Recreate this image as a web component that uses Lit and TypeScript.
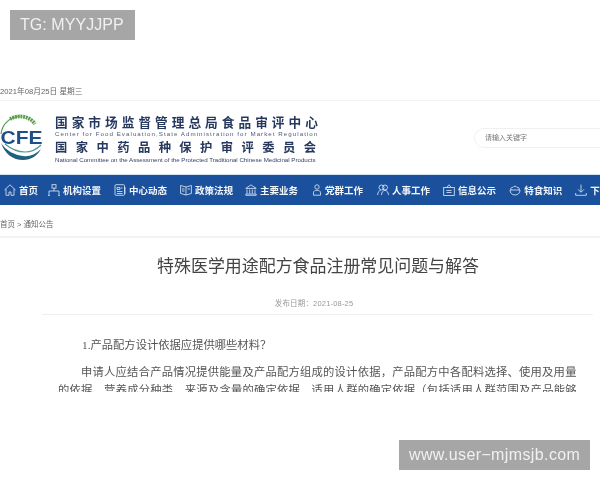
import { LitElement, html, css, svg } from "lit";
import { customElement } from "lit/decorators.js";

const I = (body: unknown) => html`<svg class="ic" viewBox="0 0 12 12" fill="none" stroke="#e4ecf6" stroke-width=".8">${body}</svg>`;
const navItems: [string, unknown][] = [
  ["首页", svg`<path d="M.5 6 6 .8 11.5 6M2 5v6.300h3V8h2v3.300h3V5"/>`],
  ["机构设置", svg`<rect x="4" y=".7" width="4" height="3.400"/><path d="M6 4v3M1 10V7h10v3M1 10v1.500M11 10v1.500M.2 11.500h1.600M10.200 11.500h1.600"/>`],
  ["中心动态", svg`<rect x="1" y=".7" width="9.500" height="10.600" rx="1"/><path d="M3 3.500h3v2H3zM3 7.500h5.500M3 9.500h5.500M7 4h1.500M11 3v7"/>`],
  ["政策法规", svg`<path d="M.6 1.500 6 3l5.400-1.500v8L6 11 .6 9.500zM6 3v8"/><path d="M2 5h2.500M7.500 5H10M2 7h2.500"/>`],
  ["主要业务", svg`<path d="M.8 4.400 6 .9l5.200 3.500zM2 5.500v4M4.700 5.500v4M7.300 5.500v4M10 5.500v4M.8 10h10.400v1.300H.8z"/>`],
  ["党群工作", svg`<circle cx="7" cy="3" r="2.200"/><path d="M3.500 11.200V8.800C3.500 7 5 6.300 7 6.300s3.500.7 3.500 2.500v2.400z"/>`],
  ["人事工作", svg`<circle cx="4.500" cy="3.500" r="2.500"/><circle cx="8" cy="3.500" r="2.500"/><path d="M.6 11c.3-3 1.600-4.400 3-4.800M4.400 11c.3-3 1.800-4.600 3.600-4.600s3.200 1.600 3.500 4.600"/>`],
  ["信息公示", svg`<rect x=".7" y="3.400" width="10.600" height="8"/><path d="M3.800 3.400 6 .8l2.200 2.600M3.500 6.500h5M3.500 8.500h5"/>`],
  ["特食知识", svg`<path d="M1 6h10c0 3-2 5-5 5S1 9 1 6zM2 6c-1-2 1-3 2-2.600C4.500 1.800 7.500 1.800 8 3.400 9.500 3 11 4.500 10 6"/>`],
  ["下载中心", svg`<path d="M6 .6v7.400M3 5.300 6 8.300l3-3M.7 9v2.300h10.600V9"/>`],
];
const gaps = [0, 10, 13, 13, 12, 12, 14, 13, 13, 13];

@customElement("app-root")
export class AppRoot extends LitElement {
  static styles = css`
    :host { display: block; position: relative; width: 600px; height: 480px; overflow: hidden; background: #fff;
      font-family: "Liberation Sans", "Noto Sans CJK SC", sans-serif; }
    .page { height: 392px; overflow: hidden; padding-top: 81px; box-sizing: border-box; filter: blur(.4px); }
    .date { height: 19px; font-size: 7.7px; line-height: 21px; color: #666; border-bottom: 1px solid #f3f3f3; white-space: nowrap; }
    .head { height: 73px; display: flex; align-items: center; }
    .logo { width: 43px; height: 50px; flex: none; margin: 1px 12px 0 0; }
    .logo text { font: 700 19px "Liberation Sans", sans-serif; }
    .names { width: 264px; flex: none; color: #27385f; white-space: nowrap; display: flex; flex-direction: column; margin-top: 3px; }
    .n1 { font-size: 12.7px; font-weight: 700; letter-spacing: 3.99px; line-height: 14px; }
    .e1 { font-size: 6.2px; letter-spacing: 1.04px; line-height: 8px; color: #4b5a7a; }
    .n2 { font-size: 12.3px; font-weight: 700; letter-spacing: 8.43px; line-height: 17px; margin-top: 2px; }
    .e2 { font-size: 6.2px; letter-spacing: -.02px; line-height: 7px; margin-top: -1px; color: #36456a; }
    .search { margin-left: 155px; width: 160px; flex: none; height: 20px; box-sizing: border-box; border: 1px solid #f0f0f0; border-radius: 10px;
      font-size: 7px; line-height: 18px; color: #777; padding-left: 10px; margin-top: 1px; white-space: nowrap; }
    nav { height: 31px; width: 640px; background: #1b519c; border-top: 1px solid #cfe2f2; box-sizing: border-box; display: flex; align-items: center; padding-left: 4px; color: #f2f5fa;
      font-size: 9.5px; font-weight: 700; white-space: nowrap; }
    .item { display: flex; align-items: center; gap: 3px; flex: none; }
    .ic { width: 12px; height: 12px; flex: none; }
    .crumb { height: 33px; padding-top: 12px; line-height: 15px; font-size: 7.5px; color: #666; border-bottom: 2px solid #f3f3f3; box-sizing: border-box; white-space: nowrap; }
    h1 { margin: 15px 0 0; text-align: center; font-weight: 400; font-size: 16.95px; line-height: 28px; color: #444; padding-left: 36px; white-space: nowrap; }
    .meta { margin: 17px 0 0; text-align: center; font-size: 7.5px; line-height: 11px; color: #999; letter-spacing: .18px; padding-left: 28px; }
    .rule { margin: 5px 7px 0 42px; height: 1px; background: #efefef; }
    .body { margin: 0 22px 0 58px; color: #555; font-size: 11.3px; line-height: 18px; font-family: "Liberation Serif", "Noto Sans CJK SC", serif; }
    .body p { margin: 0; white-space: nowrap; }
    .q { padding-top: 21px; text-indent: 24px; }
    .a { padding-top: 9px; text-indent: 23px; letter-spacing: .23px; }
    .flush { letter-spacing: .23px; }
    .tag { position: absolute; background: #a6a6a6; color: #f0f0f0; height: 30px; line-height: 30px; font-size: 16px; box-sizing: border-box; white-space: nowrap; filter: blur(.3px); font-family: "Liberation Sans", sans-serif; }
    .tg { left: 10px; top: 10px; width: 125px; padding-left: 10px; letter-spacing: .05px; }
    .site { left: 399px; top: 440px; width: 191px; padding-left: 10px; letter-spacing: .38px; }
  `;

  logo() {
    return html`<svg class="logo" viewBox="0 0 43 50" fill="none">
      <path d="M1 21C2 11 10 4 20 3" stroke="#4e9b4a" stroke-width="1.200"/>
      <path d="M10 6c7-4 19-4 25 5" stroke="#5f9f4f" stroke-width="3.800" stroke-dasharray="2 .7"/>
      <path d="M1 30c4 11 12 17 22 17 8 0 14-4 18-11-6 6-12 8-18 7C15 42 6 38 1 30z" fill="#1f5f7f"/>
      <path d="M5 31c6 5 13 8 20 8 6 0 11-2 16-7" stroke="#4f9a9a" stroke-width="1.200"/>
      <text x=".5" y="31" fill="#1e4f86" textLength="42" lengthAdjust="spacingAndGlyphs">CFE</text>
    </svg>`;
  }

  render() {
    return html`
      <div class="page">
        <div class="date">2021年08月25日 星期三</div>
        <div class="head">
          ${this.logo()}
          <div class="names">
            <span class="n1">国家市场监督管理总局食品审评中心</span>
            <span class="e1">Center for Food Evaluation,State Administration for Market Regulation</span>
            <span class="n2">国家中药品种保护审评委员会</span>
            <span class="e2">National Committee on the Assessment of the Protected Traditional Chinese Medicinal Products</span>
          </div>
          <div class="search">请输入关键字</div>
        </div>
        <nav>
          ${navItems.map(([t, p], i) => html`<span class="item" style="margin-left:${gaps[i]}px">${I(p)}<span>${t}</span></span>`)}
        </nav>
        <div class="crumb">首页 &gt; 通知公告</div>
        <h1>特殊医学用途配方食品注册常见问题与解答</h1>
        <div class="meta">发布日期：2021-08-25</div>
        <div class="rule"></div>
        <div class="body">
          <p class="q">1.产品配方设计依据应提供哪些材料？</p>
          <p class="a">申请人应结合产品情况提供能量及产品配方组成的设计依据，产品配方中各配料选择、使用及用量</p>
          <p class="flush">的依据、营养成分种类、来源及含量的确定依据、适用人群的确定依据（包括适用人群范围及产品能够</p>
        </div>
      </div>
      <div class="tag tg">TG: MYYJJPP</div>
      <div class="tag site">www.user−mjmsjb.com</div>
    `;
  }
}
